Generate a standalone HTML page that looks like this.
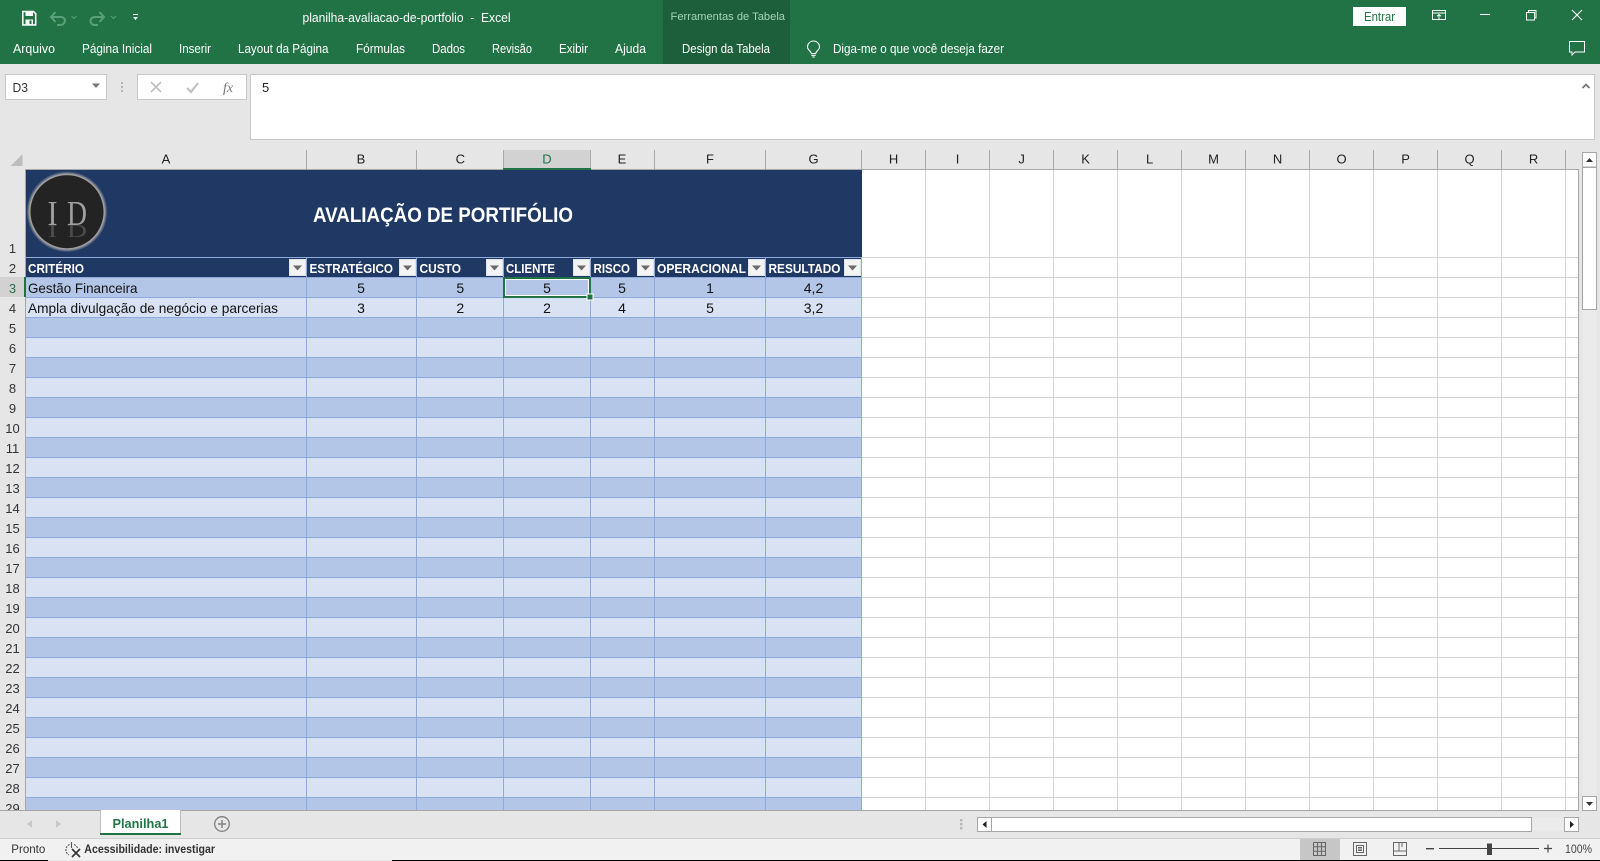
<!DOCTYPE html>
<html lang="pt">
<head>
<meta charset="utf-8">
<title>planilha-avaliacao-de-portfolio - Excel</title>
<style>
html,body{margin:0;padding:0;width:1600px;height:861px;overflow:hidden;background:#e6e6e6}
svg{display:block}
text{font-family:"Liberation Sans",sans-serif;white-space:pre}
.rb{fill:#fff;font-size:12.5px}
.ch{fill:#222;font-size:13px;text-anchor:middle}
.rh{fill:#333;font-size:13px;text-anchor:middle}
.th{fill:#fff;font-size:13px;font-weight:bold}
.td{fill:#111;font-size:14px}
.nm{fill:#111;font-size:14px;text-anchor:middle}
</style>
</head>
<body>
<svg xmlns="http://www.w3.org/2000/svg" width="1600" height="861" viewBox="0 0 1600 861">
<defs>
<pattern id="bands" patternUnits="userSpaceOnUse" x="26" y="277" width="836" height="40">
<rect width="836" height="20" fill="#b4c6e7"/>
<rect y="20" width="836" height="20" fill="#d9e2f3"/>
<rect width="836" height="1" fill="#8ea9db"/>
<rect y="20" width="836" height="1" fill="#8ea9db"/>
</pattern>
<pattern id="grid" patternUnits="userSpaceOnUse" x="862" y="257" width="64" height="20">
<rect width="64" height="1" fill="#d4d4d4"/>
</pattern>
<clipPath id="sheetclip"><rect x="0" y="170" width="1578" height="640"/></clipPath>
<linearGradient id="reflect" x1="0" y1="225" x2="0" y2="240" gradientUnits="userSpaceOnUse">
<stop offset="0" stop-color="#a8a8a8" stop-opacity="0.75"/><stop offset="1" stop-color="#a8a8a8" stop-opacity="0"/>
</linearGradient>
<radialGradient id="glow" cx="50%" cy="50%" r="50%">
<stop offset="86%" stop-color="#7d7d7d"/><stop offset="92%" stop-color="#a5a5a5"/><stop offset="100%" stop-color="#203864"/>
</radialGradient>
</defs>

<!-- base -->
<rect width="1600" height="861" fill="#e6e6e6"/>

<!-- ribbon -->
<rect width="1600" height="64" fill="#217346"/>
<rect x="663" y="0" width="127" height="64" fill="#1d5f3a"/>

<!-- QAT -->
<g fill="none" stroke="#f4f8f5" stroke-width="1.6">
<path d="M22.8 11.5H33.5L35.7 13.7V24.9H22.8Z"/>
</g>
<rect x="25.5" y="11.5" width="7.5" height="4.5" fill="#f4f8f5"/>
<rect x="25.5" y="19.5" width="7.5" height="5" fill="#f4f8f5"/>
<rect x="29.5" y="20.5" width="2" height="3.5" fill="#217346"/>
<g fill="none" stroke="#5aa07a" stroke-width="2">
<path d="M51 17H60.5C67 17 66 25 60 25H57"/>
<path d="M55.5 12L51 17L55.5 22" />
<path d="M104 17H95C89 17 89 25 95 25H98"/>
<path d="M99.5 12L104 17L99.5 22"/>
</g>
<g fill="none" stroke="#5aa07a" stroke-width="1">
<path d="M71.5 16L74 18.5L76.5 16"/>
<path d="M111 16L113.5 18.5L116 16"/>
</g>
<rect x="133" y="14" width="5" height="1" fill="#fff"/>
<path d="M133 17H138L135.5 20Z" fill="#fff"/>

<!-- title -->
<text x="302.5" y="22" class="rb" fill="#fff" textLength="208" lengthAdjust="spacingAndGlyphs">planilha-avaliacao-de-portfolio  -  Excel</text>
<text x="670.5" y="20" style="font-size:11px;fill:#a4d3b8" textLength="114.5" lengthAdjust="spacingAndGlyphs">Ferramentas de Tabela</text>

<!-- tabs -->
<text x="13" y="53" class="rb" textLength="42" lengthAdjust="spacingAndGlyphs">Arquivo</text>
<text x="82" y="53" class="rb" textLength="70" lengthAdjust="spacingAndGlyphs">Página Inicial</text>
<text x="179" y="53" class="rb" textLength="32" lengthAdjust="spacingAndGlyphs">Inserir</text>
<text x="238" y="53" class="rb" textLength="90.5" lengthAdjust="spacingAndGlyphs">Layout da Página</text>
<text x="356" y="53" class="rb" textLength="49" lengthAdjust="spacingAndGlyphs">Fórmulas</text>
<text x="432" y="53" class="rb" textLength="33" lengthAdjust="spacingAndGlyphs">Dados</text>
<text x="492" y="53" class="rb" textLength="40" lengthAdjust="spacingAndGlyphs">Revisão</text>
<text x="559" y="53" class="rb" textLength="29" lengthAdjust="spacingAndGlyphs">Exibir</text>
<text x="615" y="53" class="rb" textLength="31" lengthAdjust="spacingAndGlyphs">Ajuda</text>
<text x="682" y="53" class="rb" textLength="88" lengthAdjust="spacingAndGlyphs">Design da Tabela</text>
<text x="833" y="53" class="rb" textLength="171" lengthAdjust="spacingAndGlyphs">Diga-me o que você deseja fazer</text>
<!-- bulb -->
<g fill="none" stroke="#fff" stroke-width="1.1">
<path d="M811.3 53.5C811 51 807.5 50 807.5 47A6 6 0 0 1 819.5 47C819.5 50 816 51 815.7 53.5Z"/>
<path d="M811.3 55.3H815.7M812.3 57H814.7"/>
</g>

<!-- Entrar + window controls -->
<rect x="1353" y="7" width="53" height="19" fill="#fff"/>
<text x="1364" y="21" style="font-size:12.5px;fill:#217346" textLength="31" lengthAdjust="spacingAndGlyphs">Entrar</text>
<g fill="none" stroke="#fff" stroke-width="1">
<path d="M1432.5 10.5H1445.5V19.5H1432.5Z M1432.5 13H1445.5"/>
<path d="M1439 19V14.5M1437 16.3L1439 14.5L1441 16.3"/>
<path d="M1480 14.5H1490"/>
<path d="M1526.5 12.5H1534.5V20H1526.5Z M1528.5 12.5V10.5H1536V18H1534.5"/>
<path d="M1572 10L1582 20M1582 10L1572 20" stroke-width="1.1"/>
<path d="M1569.5 41.5H1584.5V52H1575L1572 55V52H1569.5Z"/>
</g>

<!-- formula bar -->
<rect x="5.5" y="74.5" width="101" height="25" fill="#fff" stroke="#c6c6c6"/>
<text x="12.5" y="92" style="font-size:13px;fill:#333" textLength="15.5" lengthAdjust="spacingAndGlyphs">D3</text>
<path d="M92 83.5H100L96 88Z" fill="#777"/>
<g fill="#b5b5b5"><rect x="121" y="82" width="2" height="2"/><rect x="121" y="86" width="2" height="2"/><rect x="121" y="90" width="2" height="2"/></g>
<rect x="137.5" y="74.5" width="109" height="25" fill="#fff" stroke="#c6c6c6"/>
<path d="M151 82L161 92M161 82L151 92" stroke="#c0c0c0" stroke-width="1.6" fill="none"/>
<path d="M187 88L191 92L198 83" stroke="#c0c0c0" stroke-width="2.2" fill="none"/>
<text x="223" y="92" style="font-family:'Liberation Serif',serif;font-style:italic;font-size:14px;fill:#777">fx</text>
<rect x="250.5" y="74.5" width="1344" height="65" fill="#fff" stroke="#c6c6c6"/>
<text x="262" y="92" style="font-size:13px;fill:#222">5</text>
<path d="M1582.5 88L1586 84.5L1589.5 88" fill="none" stroke="#777" stroke-width="1.8"/>

<!-- column header -->
<path d="M22.5 154V166H10.7Z" fill="#bdbdbd"/>
<rect x="503" y="150" width="88" height="19" fill="#d2d2d2"/>
<g fill="none" stroke="#a9a9a9">
<path d="M306.5 150V169M416.5 150V169M503.5 150V169M590.5 150V169M654.5 150V169M765.5 150V169M861.5 150V169M925.5 150V169M989.5 150V169M1053.5 150V169M1117.5 150V169M1181.5 150V169M1245.5 150V169M1309.5 150V169M1373.5 150V169M1437.5 150V169M1501.5 150V169M1565.5 150V169"/>
</g>
<rect x="503" y="168" width="88" height="2" fill="#217346"/>
<text x="166" y="163.5" class="ch">A</text>
<text x="361" y="163.5" class="ch">B</text>
<text x="460.3" y="163.5" class="ch">C</text>
<text x="547" y="163.5" class="ch" style="fill:#217346">D</text>
<text x="622" y="163.5" class="ch">E</text>
<text x="710" y="163.5" class="ch">F</text>
<text x="813.5" y="163.5" class="ch">G</text>
<text x="893.6" y="163.5" class="ch">H</text>
<text x="957.6" y="163.5" class="ch">I</text>
<text x="1021.6" y="163.5" class="ch">J</text>
<text x="1085.6" y="163.5" class="ch">K</text>
<text x="1149.6" y="163.5" class="ch">L</text>
<text x="1213.6" y="163.5" class="ch">M</text>
<text x="1277.6" y="163.5" class="ch">N</text>
<text x="1341.6" y="163.5" class="ch">O</text>
<text x="1405.6" y="163.5" class="ch">P</text>
<text x="1469.6" y="163.5" class="ch">Q</text>
<text x="1533.6" y="163.5" class="ch">R</text>

<!-- sheet area -->
<rect x="26" y="170" width="1552" height="640" fill="#fff"/>
<rect x="862" y="257" width="716" height="553" fill="url(#grid)"/>
<path d="M925.5 170V810M989.5 170V810M1053.5 170V810M1117.5 170V810M1181.5 170V810M1245.5 170V810M1309.5 170V810M1373.5 170V810M1437.5 170V810M1501.5 170V810M1565.5 170V810" stroke="#d4d4d4" fill="none"/>

<!-- table -->
<rect x="26" y="170" width="836" height="107" fill="#203864"/>
<rect x="26" y="277" width="836" height="533" fill="url(#bands)"/>
<rect x="26" y="257" width="836" height="1" fill="#8ea9db"/>
<path d="M306.5 258V810M416.5 258V810M503.5 258V810M590.5 258V810M654.5 258V810M765.5 258V810M861.5 258V810" stroke="#8ea9db" fill="none"/>

<!-- sheet frame -->
<rect x="25" y="169" width="1553" height="1" fill="#a6a6a6"/>
<rect x="25" y="169" width="1" height="641" fill="#a6a6a6"/>
<rect x="1578" y="169" width="1" height="642" fill="#a6a6a6"/>
<rect x="0" y="810" width="1579" height="1" fill="#a6a6a6"/>
<rect x="503" y="168" width="88" height="2" fill="#217346"/>

<!-- logo -->
<circle cx="67" cy="211.7" r="40.5" fill="url(#glow)"/>
<circle cx="67" cy="211.7" r="36.5" fill="#232323"/>
<text x="47.5" y="225" style="font-family:'Liberation Serif',serif;font-size:35px;fill:#a0a0a0" textLength="10" lengthAdjust="spacingAndGlyphs">I</text>
<text x="67" y="225" style="font-family:'Liberation Serif',serif;font-size:35px;fill:#a0a0a0" textLength="20" lengthAdjust="spacingAndGlyphs">D</text>
<g transform="translate(0,337.5) scale(1,-0.5)">
<text x="47.5" y="225" style="font-family:'Liberation Serif',serif;font-size:35px;fill:#8a8a8a;opacity:.4" textLength="10" lengthAdjust="spacingAndGlyphs">I</text>
<text x="67" y="225" style="font-family:'Liberation Serif',serif;font-size:35px;fill:#8a8a8a;opacity:.4" textLength="20" lengthAdjust="spacingAndGlyphs">D</text>
</g>

<!-- title text -->
<text x="313" y="222" style="font-size:21px;font-weight:bold;fill:#fff" textLength="260" lengthAdjust="spacingAndGlyphs">AVALIAÇÃO DE PORTIFÓLIO</text>

<!-- table headers -->
<text x="28" y="273" class="th" textLength="56" lengthAdjust="spacingAndGlyphs">CRITÉRIO</text>
<text x="309.5" y="273" class="th" textLength="83.5" lengthAdjust="spacingAndGlyphs">ESTRATÉGICO</text>
<text x="419.5" y="273" class="th" textLength="41.5" lengthAdjust="spacingAndGlyphs">CUSTO</text>
<text x="506" y="273" class="th" textLength="49" lengthAdjust="spacingAndGlyphs">CLIENTE</text>
<text x="593.5" y="273" class="th" textLength="36.5" lengthAdjust="spacingAndGlyphs">RISCO</text>
<text x="657" y="273" class="th" textLength="89" lengthAdjust="spacingAndGlyphs">OPERACIONAL</text>
<text x="768.5" y="273" class="th" textLength="72" lengthAdjust="spacingAndGlyphs">RESULTADO</text>

<!-- filter buttons -->
<g fill="#f3f3f3" stroke="#dfe3ea" stroke-width="1">
<rect x="289.5" y="259.5" width="16" height="16"/>
<rect x="399.5" y="259.5" width="16" height="16"/>
<rect x="486.5" y="259.5" width="16" height="16"/>
<rect x="573.5" y="259.5" width="16" height="16"/>
<rect x="637.5" y="259.5" width="16" height="16"/>
<rect x="748.5" y="259.5" width="16" height="16"/>
<rect x="844.5" y="259.5" width="16" height="16"/>
</g>
<g fill="#6a6a6a">
<path d="M293 265.5H302L297.5 270.5Z"/>
<path d="M403 265.5H412L407.5 270.5Z"/>
<path d="M490 265.5H499L494.5 270.5Z"/>
<path d="M577 265.5H586L581.5 270.5Z"/>
<path d="M641 265.5H650L645.5 270.5Z"/>
<path d="M752 265.5H761L756.5 270.5Z"/>
<path d="M848 265.5H857L852.5 270.5Z"/>
</g>

<!-- data -->
<text x="28" y="293" class="td" textLength="109.5" lengthAdjust="spacingAndGlyphs">Gestão Financeira</text>
<text x="28" y="313" class="td" textLength="250" lengthAdjust="spacingAndGlyphs">Ampla divulgação de negócio e parcerias</text>
<text x="361" y="293" class="nm">5</text><text x="460.3" y="293" class="nm">5</text><text x="547" y="293" class="nm">5</text><text x="622" y="293" class="nm">5</text><text x="710" y="293" class="nm">1</text><text x="813.5" y="293" class="nm">4,2</text>
<text x="361" y="313" class="nm">3</text><text x="460.3" y="313" class="nm">2</text><text x="547" y="313" class="nm">2</text><text x="622" y="313" class="nm">4</text><text x="710" y="313" class="nm">5</text><text x="813.5" y="313" class="nm">3,2</text>

<!-- selection -->
<rect x="504" y="278" width="86" height="19" fill="none" stroke="#217346" stroke-width="2"/>
<rect x="505.5" y="279.5" width="83" height="16" fill="none" stroke="#fff" stroke-width="1"/>
<rect x="586.5" y="293.5" width="7" height="7" fill="#fff"/>
<rect x="587.5" y="294.5" width="5" height="5" fill="#217346"/>

<!-- row header -->
<rect x="0" y="277" width="24" height="20" fill="#d2d2d2"/>
<rect x="24" y="277" width="2" height="20" fill="#217346"/>
<g clip-path="url(#sheetclip)">
<text x="12.5" y="253" class="rh">1</text>
<text x="12.5" y="273" class="rh">2</text>
<text x="12.5" y="293" class="rh" style="fill:#217346">3</text>
<text x="12.5" y="313" class="rh">4</text>
<text x="12.5" y="333" class="rh">5</text>
<text x="12.5" y="353" class="rh">6</text>
<text x="12.5" y="373" class="rh">7</text>
<text x="12.5" y="393" class="rh">8</text>
<text x="12.5" y="413" class="rh">9</text>
<text x="12.5" y="433" class="rh">10</text>
<text x="12.5" y="453" class="rh">11</text>
<text x="12.5" y="473" class="rh">12</text>
<text x="12.5" y="493" class="rh">13</text>
<text x="12.5" y="513" class="rh">14</text>
<text x="12.5" y="533" class="rh">15</text>
<text x="12.5" y="553" class="rh">16</text>
<text x="12.5" y="573" class="rh">17</text>
<text x="12.5" y="593" class="rh">18</text>
<text x="12.5" y="613" class="rh">19</text>
<text x="12.5" y="633" class="rh">20</text>
<text x="12.5" y="653" class="rh">21</text>
<text x="12.5" y="673" class="rh">22</text>
<text x="12.5" y="693" class="rh">23</text>
<text x="12.5" y="713" class="rh">24</text>
<text x="12.5" y="733" class="rh">25</text>
<text x="12.5" y="753" class="rh">26</text>
<text x="12.5" y="773" class="rh">27</text>
<text x="12.5" y="793" class="rh">28</text>
<text x="12.5" y="813" class="rh">29</text>
</g>

<!-- vertical scrollbar -->
<rect x="1582.5" y="152.5" width="14" height="658" fill="#ebebeb"/>
<rect x="1582.5" y="152.5" width="14" height="14.5" fill="#fff" stroke="#a6a6a6"/>
<path d="M1586 162H1593L1589.5 158Z" fill="#333"/>
<rect x="1582.5" y="167.5" width="14" height="142" fill="#fff" stroke="#a6a6a6"/>
<rect x="1582.5" y="796.5" width="14" height="14" fill="#fff" stroke="#a6a6a6"/>
<path d="M1586 802H1593L1589.5 806Z" fill="#333"/>

<!-- sheet tabs -->
<path d="M32 820V828L27 824Z" fill="#c9c9c9"/>
<path d="M56 820V828L61 824Z" fill="#c9c9c9"/>
<rect x="100" y="810" width="81" height="23" fill="#fff"/>
<rect x="100" y="833" width="81" height="2" fill="#217346"/>
<rect x="100" y="810" width="1" height="23" fill="#bfbfbf"/>
<rect x="180" y="810" width="1" height="23" fill="#bfbfbf"/>
<text x="112.5" y="828" style="font-size:13px;font-weight:bold;fill:#217346" textLength="56" lengthAdjust="spacingAndGlyphs">Planilha1</text>
<circle cx="222" cy="824" r="7.3" fill="none" stroke="#808080" stroke-width="1.3"/>
<path d="M218 824H226M222 820V828" stroke="#808080" stroke-width="1.4" fill="none"/>

<!-- horizontal scrollbar -->
<g fill="#b8b8b8"><rect x="960" y="819" width="2.5" height="2.5"/><rect x="960" y="823" width="2.5" height="2.5"/><rect x="960" y="827" width="2.5" height="2.5"/></g>
<rect x="977.5" y="817.5" width="14" height="14" fill="#fff" stroke="#a6a6a6"/>
<path d="M986.5 821V828L982.5 824.5Z" fill="#222"/>
<rect x="991.5" y="817.5" width="540" height="14" fill="#fff" stroke="#a6a6a6"/>
<rect x="1532" y="817.5" width="32" height="14" fill="#ebebeb"/>
<rect x="1564.5" y="817.5" width="14" height="14" fill="#fff" stroke="#a6a6a6"/>
<path d="M1570 821V828L1574 824.5Z" fill="#222"/>

<!-- status bar -->
<rect x="0" y="838" width="1600" height="1" fill="#cfcfcf"/>
<rect x="0" y="839" width="1600" height="21" fill="#f1f1f1"/>
<rect x="0" y="860" width="48" height="1" fill="#000"/>
<rect x="392" y="860" width="1208" height="1" fill="#000"/>
<text x="11.3" y="853" style="font-size:12px;fill:#333" textLength="34" lengthAdjust="spacingAndGlyphs">Pronto</text>
<g fill="none" stroke="#555" stroke-width="1.1">
<path d="M71.5 842V848"/>
<path d="M69.5 844.5A5.8 5.8 0 0 0 69 855" stroke-dasharray="2 1"/>
<path d="M74 844.5A5.5 5.5 0 0 1 77.5 848" stroke-dasharray="2 1"/>
<path d="M72 849L80 857M80 849L72 857" stroke="#333" stroke-width="1.6"/>
</g>
<text x="84.3" y="853" style="font-size:12px;font-weight:bold;fill:#333" textLength="130.7" lengthAdjust="spacingAndGlyphs">Acessibilidade: investigar</text>

<rect x="1300" y="839" width="40" height="21" fill="#c6c6c6"/>
<g fill="none" stroke="#666" stroke-width="1">
<path d="M1313.5 842.5H1325.5V855.5H1313.5Z M1317.5 842.5V855.5M1321.5 842.5V855.5M1313.5 846.8H1325.5M1313.5 851.2H1325.5"/>
<path d="M1353.5 842.5H1366.5V855.5H1353.5Z M1356.5 845.5H1363.5V852.5H1356.5Z M1358 847.5H1362M1358 849H1362M1358 850.5H1362"/>
<path d="M1393.5 842.5H1406.5V855.5H1393.5Z M1393.5 851H1406.5M1399 842.5V851M1402 842.5V847"/>
</g>
<rect x="1426" y="848" width="8" height="1.4" fill="#444"/>
<rect x="1439" y="848" width="100" height="1" fill="#444"/>
<rect x="1487" y="843.5" width="5" height="11.5" fill="#444"/>
<path d="M1544 848.5H1552M1548 844.5V852.5" stroke="#444" stroke-width="1.2" fill="none"/>
<text x="1565" y="853" style="font-size:12px;fill:#444" textLength="27" lengthAdjust="spacingAndGlyphs">100%</text>
</svg>
</body>
</html>
